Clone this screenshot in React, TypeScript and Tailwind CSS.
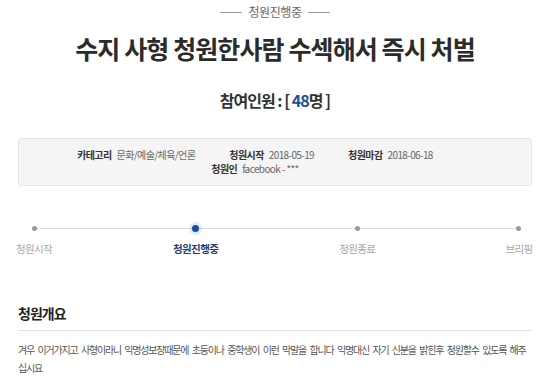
const steps = [
  { label: "청원시작", active: false },
  { label: "청원진행중", active: true },
  { label: "청원종료", active: false },
  { label: "브리핑", active: false },
];

const font = { fontFamily: '"Noto Sans CJK KR", "Noto Sans", sans-serif' };

export default function App() {
  return (
    <div className="w-[550px] h-[386px] bg-white overflow-hidden text-[#333]" style={font}>
      {/* status */}
      <div className="flex items-center justify-center gap-[6px] pt-[4px]">
        <span className="w-[22px] h-px bg-[#999]" />
        <span className="text-[12px] leading-[16px] text-[#666] tracking-[-0.4px]">청원진행중</span>
        <span className="w-[22px] h-px bg-[#999]" />
      </div>

      <h1 className="mt-[12px] text-center text-[25px] leading-[32px] font-bold text-[#2b2b2b] tracking-[-0.9px]">
        수지 사형 청원한사람 수섹해서 즉시 처벌
      </h1>

      <p className="mt-[26px] text-center text-[16px] leading-[20px] font-bold text-[#333] tracking-[-1px]">
        참여인원 : [ <span className="text-[#1c4f96]">48</span>명 ]
      </p>

      <div className="mx-[18px] mt-[28px] h-[48px] rounded-[3px] border border-[#e6e6e6] bg-[#f5f5f5] pt-[9px] text-[10px] leading-[14px] tracking-[-0.6px]">
        <div className="flex justify-center gap-[34px] pr-[40px]">
          <div className="flex gap-[5px]">
            <span className="font-bold text-[#333]">카테고리</span>
            <span className="text-[#666]">문화/예술/체육/언론</span>
          </div>
          <div className="flex gap-[5px]">
            <span className="font-bold text-[#333]">청원시작</span>
            <span className="text-[#666]">2018-05-19</span>
          </div>
          <div className="flex gap-[5px]">
            <span className="font-bold text-[#333]">청원마감</span>
            <span className="text-[#666]">2018-06-18</span>
          </div>
        </div>
        <div className="flex justify-center gap-[5px] pr-[40px]">
          <span className="font-bold text-[#333]">청원인</span>
          <span className="text-[#666]">facebook - ***</span>
        </div>
      </div>

      {/* progress */}
      <div className="relative mt-[40px] flex justify-between pl-[14px] pr-[11px]">
        <div className="absolute left-[34px] right-[31px] top-[2px] h-px bg-[#dcdcdc]" />
        {steps.map((s) => (
          <div key={s.label} className="relative flex w-[40px] flex-col items-center">
            {s.active ? (
              <span className="mt-[-1px] h-[7px] w-[7px] rounded-full bg-[#1a4d96] shadow-[0_0_0_3px_rgba(80,150,230,0.18)]" />
            ) : (
              <span className="h-[5px] w-[5px] rounded-full bg-[#9a9a9a]" />
            )}
            <span
              className={
                s.active
                  ? "mt-[10px] whitespace-nowrap text-[10.5px] leading-[13px] font-bold text-[#1e3e6e] tracking-[-0.6px]"
                  : "mt-[11px] whitespace-nowrap text-[10.5px] leading-[13px] text-[#a8a8a8] tracking-[-0.6px]"
              }
            >
              {s.label}
            </span>
          </div>
        ))}
      </div>

      {/* overview */}
      <div className="mx-[18px] mt-[49px]">
        <h2 className="text-[14px] leading-[18px] font-bold text-[#222] tracking-[-1px]">청원개요</h2>
        <div className="mt-[8px] h-px bg-[#e3e3e3]" />
        <p className="mt-[10px] pr-[4px] text-[10px] leading-[18px] text-[#555] tracking-[-1.2px] [word-spacing:2.4px]">
          겨우 이거가지고 사형이라니 익명성보장때문에 초등이나 중학생이 이런 막말을 합니다 익명대신 자기 신분을 밝힌후 청원할수 있도록 해주십시요
        </p>
      </div>
    </div>
  );
}
